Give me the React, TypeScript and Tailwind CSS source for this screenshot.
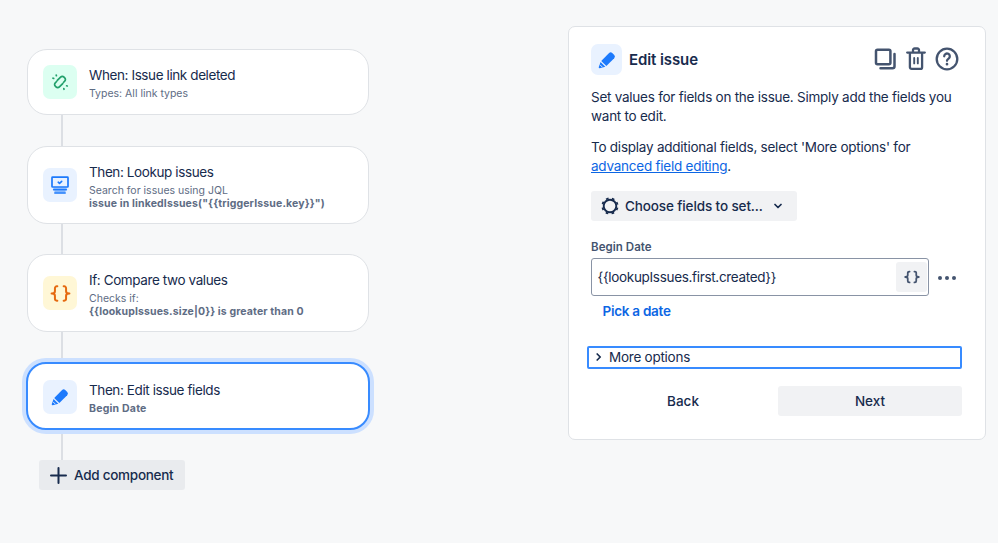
import type { ReactNode } from "react";

function Pencil({ size }: { size: number }) {
  return (
    <svg width={size} height={size} viewBox="0 0 18 18" fill="#1d7afc">
      <path d="M3.8 9.9 10.900 2.800a2 2 0 0 1 2.800 0l1.800 1.800a2 2 0 0 1 0 2.800L8.400 14.500z" />
      <path d="M3.200 10.800 7.500 15.100l-5 1.300c-.7.200-1.100-.3-.9-1z" />
      <path d="M2.700 13.300 4.900 15.500" stroke="#e9f2ff" strokeWidth="0.800" />
    </svg>
  );
}

function Unlink() {
  return (
    <svg width="20" height="20" viewBox="0 0 20 20" fill="none" stroke="#22a06b" strokeWidth="1.700" strokeLinecap="round">
      <path d="M7.300 8.400l3.300-3.300a2.400 2.400 0 0 1 3.400 0l.7.700a2.400 2.400 0 0 1 0 3.400l-1.300 1.300M12.700 11.600l-3.300 3.300a2.400 2.400 0 0 1-3.400 0l-.7-.7a2.400 2.400 0 0 1 0-3.400l1.300-1.300" />
      <path d="M3 6.200l.7.200M6.200 3l.2.700M16.600 13.800l.7.200M13.800 16.600l.2.700" />
    </svg>
  );
}

function Lookup() {
  return (
    <svg width="20" height="20" viewBox="0 0 20 20" fill="none" stroke="#1d7afc" strokeWidth="1.700" strokeLinecap="round" strokeLinejoin="round">
      <path d="M3.300 12.500h13.400v2H3.300zM4.500 15.500h11v2h-11z" fill="#85b8ff" stroke="none" />
      <rect x="2" y="2.200" width="16" height="9.800" rx="0.600" />
      <path d="M8.200 7.200l1.300 1.200 2.200-2.100" strokeWidth="1.600" />
      <path d="M3.600 14.800h12.800M4.800 17.900h10.400" strokeWidth="1.500" />
    </svg>
  );
}

function Braces({ size, color, width }: { size: number; color: string; width: number }) {
  return (
    <svg width={size} height={size} viewBox="0 0 20 20" fill="none" stroke={color} strokeWidth={width} strokeLinecap="round" strokeLinejoin="round">
      <path d="M7 3.200H6.400a1.700 1.700 0 0 0-1.700 1.700v3Q4.700 10 1.500 10 4.700 10 4.700 12.100v3a1.700 1.700 0 0 0 1.700 1.700H7" />
      <path d="M13 3.200h.6a1.700 1.700 0 0 1 1.700 1.700v3Q15.300 10 18.500 10 15.300 10 15.300 12.100v3a1.700 1.700 0 0 1-1.700 1.700H13" />
    </svg>
  );
}

function Gear() {
  return (
    <svg width="20" height="20" viewBox="0 0 20 20" fill="none" stroke="#172b4d">
      <circle cx="10" cy="10" r="6.300" strokeWidth="1.900" />
      <circle cx="10" cy="10" r="7.700" strokeWidth="1.700" strokeDasharray="2.700 3.347" strokeDashoffset="-1.670" />
    </svg>
  );
}

function Tile({ className, children }: { className: string; children: ReactNode }) {
  return <div className={`flex shrink-0 items-center justify-center rounded-[7px] ${className}`}>{children}</div>;
}

function Step({ className, tile, icon, title, children }: { className: string; tile: string; icon: ReactNode; title: string; children: ReactNode }) {
  return (
    <div className={`relative z-10 flex items-center rounded-[20px] bg-white pl-[15px] ${className}`}>
      <Tile className={`size-[34px] ${tile}`}>{icon}</Tile>
      <div className="ml-3 pt-[3px]">
        <div className="text-[13.5px] leading-[18px] tracking-[-0.4px] text-[#172b4d]">{title}</div>
        <div className="mt-1 text-[10.5px] leading-[12.5px] text-[#5e6c84]">{children}</div>
      </div>
    </div>
  );
}

function Connector({ className }: { className: string }) {
  return <div className={`ml-[34px] w-[2px] bg-[#dcdfe4] ${className}`} />;
}

export default function App() {
  return (
    <div className="flex h-[543px] w-[998px] items-start justify-between overflow-hidden bg-[#f7f8f9] font-['Inter','Liberation_Sans',sans-serif] text-[#172b4d]">
      <main className="ml-[27px] flex w-[343px] flex-col pt-[49px]">
        <Step className="h-[66px] w-[342px] border border-[#dfe2e6]" tile="bg-[#dcfff1]" icon={<Unlink />} title="When: Issue link deleted">
          Types: All link types
        </Step>
        <Connector className="h-[31px]" />
        <Step className="h-[78px] w-[342px] border border-[#dfe2e6]" tile="bg-[#e9f2ff]" icon={<Lookup />} title="Then: Lookup issues">
          Search for issues using JQL
          <br />
          <b className="font-bold tracking-[0.14px]">issue in linkedIssues("{"{{triggerIssue.key}}"}")</b>
        </Step>
        <Connector className="h-[30px]" />
        <Step className="h-[78px] w-[342px] border border-[#dfe2e6]" tile="bg-[#fff7d6]" icon={<Braces size={21} color="#e56910" width={1.9} />} title="If: Compare two values">
          Checks if:
          <br />
          <b className="font-bold tracking-[0.12px]">{"{{lookupIssues.size|0}}"} is greater than 0</b>
        </Step>
        <Connector className="h-[30px]" />
        <Step className="-ml-px h-[68px] w-[344px] border-2 border-[#388bff] pt-px ring-4 ring-[#cce0ff]" tile="bg-[#e9f2ff]" icon={<Pencil size={20} />} title="Then: Edit issue fields">
          <b className="font-bold tracking-[0.22px]">Begin Date</b>
        </Step>
        <Connector className="h-[30px]" />
        <button className="ml-3 flex h-[30px] w-[146px] items-center rounded-[3px] bg-[#e9ebee] pl-[11px]">
          <svg width="17" height="17" viewBox="0 0 17 17" stroke="#172b4d" strokeWidth="2" strokeLinecap="round">
            <path d="M8.500 1v15M1 8.500h15" />
          </svg>
          <span className="ml-[7px] text-[13.5px] font-medium tracking-[-0.27px]">Add component</span>
        </button>
      </main>

      <aside className="mt-[26px] mr-[12px] flex h-[414px] w-[418px] flex-col rounded-[7px] border border-[#dfe2e6] bg-white pr-[23px] pl-[22px]">
        <header className="mt-[17px] flex h-[31px] items-center">
          <Tile className="size-[31px] bg-[#e9f2ff]">
            <Pencil size={20} />
          </Tile>
          <h1 className="ml-[7px] flex-1 pt-px text-[15px] font-semibold tracking-[-0.1px]">Edit issue</h1>
          <div className="mr-[3px] mb-px flex items-center gap-[7px]">
            <svg width="24" height="24" viewBox="0 0 24 24" fill="none" stroke="#44546f" strokeWidth="2.500" strokeLinecap="round" strokeLinejoin="round">
              <rect x="3" y="2.800" width="14.400" height="14.400" rx="1.500" />
              <path d="M21.500 7v12.200a2 2 0 0 1-2 2H7.500" />
            </svg>
            <svg width="24" height="24" viewBox="0 0 24 24" fill="none" stroke="#44546f" strokeWidth="2.300" strokeLinecap="round" strokeLinejoin="round">
              <path d="M3.200 5.600h17.600M5.900 5.600v14.600A1.700 1.700 0 0 0 7.600 21.900h8.800a1.700 1.700 0 0 0 1.700-1.700V5.600M9 5.200V3.400A1.700 1.700 0 0 1 10.700 1.500h2.600A1.700 1.700 0 0 1 15 3.400V5.200" />
              <path d="M10.200 11v5.400M13.800 11v5.400" strokeWidth="1.900" />
            </svg>
            <svg width="24" height="24" viewBox="0 0 24 24" fill="none" stroke="#44546f" strokeWidth="2.300" strokeLinecap="round" strokeLinejoin="round">
              <circle cx="12" cy="12" r="10.300" />
              <path d="M9.200 9.300a2.800 2.800 0 1 1 4.400 2.300c-1 .7-1.600 1.100-1.600 2.200" />
              <circle cx="12" cy="17.200" r="0.600" fill="#44546f" strokeWidth="1.500" />
            </svg>
          </div>
        </header>
        <p className="mt-[13px] text-[13.5px] leading-[19px] tracking-[-0.25px] whitespace-nowrap">
          Set values for fields on the issue. Simply add the fields you
          <br />
          want to edit.
        </p>
        <p className="mt-[12px] text-[13.5px] leading-[19px] tracking-[-0.24px] whitespace-nowrap">
          To display additional fields, select 'More options' for
          <br />
          <a className="text-[#0c66e4] underline">advanced field editing</a>.
        </p>
        <button className="mt-[15px] flex h-[30px] w-[206px] shrink-0 items-center rounded-[3px] bg-[#f1f2f4] pl-[9px]">
          <Gear />
          <span className="ml-[5px] text-[13.5px] font-medium tracking-[-0.12px] whitespace-nowrap">Choose fields to set...</span>
          <svg className="ml-[11px]" width="8" height="6" viewBox="0 0 8 6" fill="none" stroke="#172b4d" strokeWidth="1.700" strokeLinecap="round" strokeLinejoin="round">
            <path d="M1 1.500l3 3 3-3" />
          </svg>
        </button>
        <label className="mt-[18px] text-[11.5px] leading-[16px] font-semibold tracking-[0.05px] text-[#44546f]">Begin Date</label>
        <div className="mt-[3px] flex items-center">
          <div className="flex h-[38px] w-[338px] items-center justify-between rounded-[3px] border border-[#8993a5] pr-[1px] pl-[5.5px]">
            <span className="text-[13.5px] tracking-[-0.32px]">{"{{lookupIssues.first.created}}"}</span>
            <span className="flex h-[30px] w-[31px] items-center justify-center rounded-[3px] bg-[#f1f2f4]">
              <Braces size={16} color="#44546f" width={2.2} />
            </span>
          </div>
          <svg className="mt-[2px] ml-[9px]" width="18" height="4" viewBox="0 0 18 4" fill="#44546f">
            <circle cx="2" cy="2" r="2" />
            <circle cx="9" cy="2" r="2" />
            <circle cx="16" cy="2" r="2" />
          </svg>
        </div>
        <a className="mt-[6px] ml-[11.5px] text-[13.5px] leading-[18px] font-semibold tracking-[-0.27px] text-[#0c66e4]">Pick a date</a>
        <div className="mt-[26px] -ml-[4px] flex h-[23px] w-[375px] shrink-0 items-center rounded-[2px] border-2 border-[#388bff] pb-px pl-[7px]">
          <svg width="6" height="8" viewBox="0 0 6 8" fill="none" stroke="#172b4d" strokeWidth="1.700" strokeLinecap="round" strokeLinejoin="round">
            <path d="M1.200 1l3 3-3 3" />
          </svg>
          <span className="ml-[7px] text-[13.5px] leading-[18px] tracking-[-0.25px]">More options</span>
        </div>
        <div className="mt-[17px] flex h-[30px] gap-[3px] text-[13.5px] font-medium">
          <button className="w-[184px]">Back</button>
          <button className="w-[184px] rounded-[3px] bg-[#f1f2f4]">Next</button>
        </div>
      </aside>
    </div>
  );
}
